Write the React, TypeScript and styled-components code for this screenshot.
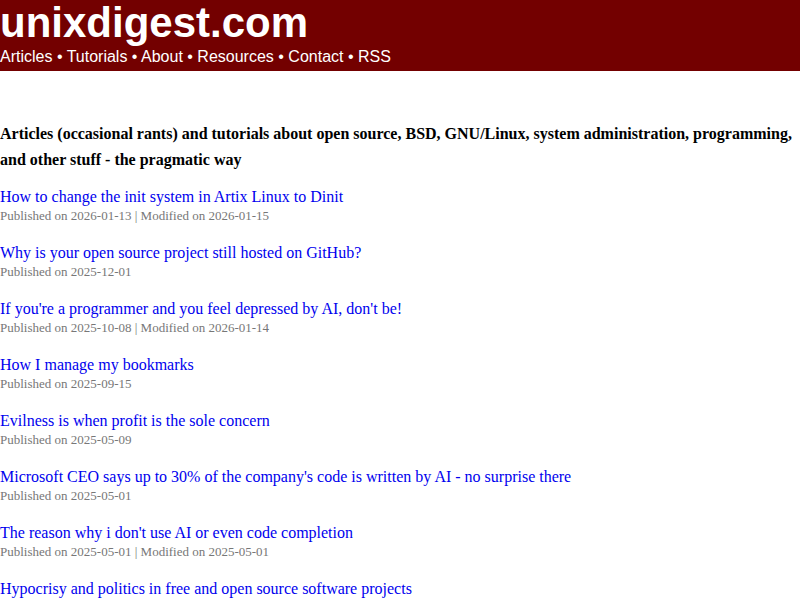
import React from 'react'
import styled, { createGlobalStyle } from 'styled-components'

const GlobalStyle = createGlobalStyle`
  body {
    margin: 0;
    background: #ffffff;
    font-family: 'Liberation Serif', 'Times New Roman', serif;
  }
`

interface Article {
  title: string
  published: string
  modified?: string
}

const articles: Article[] = [
  { title: 'How to change the init system in Artix Linux to Dinit', published: '2026-01-13', modified: '2026-01-15' },
  { title: 'Why is your open source project still hosted on GitHub?', published: '2025-12-01' },
  { title: "If you're a programmer and you feel depressed by AI, don't be!", published: '2025-10-08', modified: '2026-01-14' },
  { title: 'How I manage my bookmarks', published: '2025-09-15' },
  { title: 'Evilness is when profit is the sole concern', published: '2025-05-09' },
  { title: "Microsoft CEO says up to 30% of the company's code is written by AI - no surprise there", published: '2025-05-01' },
  { title: "The reason why i don't use AI or even code completion", published: '2025-05-01', modified: '2025-05-01' },
  { title: 'Hypocrisy and politics in free and open source software projects', published: '2025-04-20' }
]

const navItems = ['Articles', 'Tutorials', 'About', 'Resources', 'Contact', 'RSS']

const App: React.FC = () => {
  return (
    <>
      <GlobalStyle />
      <Header>
        <SiteTitle href="#">unixdigest.com</SiteTitle>
        <Nav>
          {navItems.map((item, i) => (
            <React.Fragment key={item}>
              {i > 0 && <Bullet> • </Bullet>}
              <NavLink href="#">{item}</NavLink>
            </React.Fragment>
          ))}
        </Nav>
      </Header>
      <Main>
        <Intro>
          Articles (occasional rants) and tutorials about open source, BSD, GNU/Linux, system administration,
          programming, and other stuff - the pragmatic way
        </Intro>
        <List>
          {articles.map((a) => (
            <Item key={a.title}>
              <ArticleLink href="#">{a.title}</ArticleLink>
              <Meta>
                Published on {a.published}
                {a.modified ? ` | Modified on ${a.modified}` : ''}
              </Meta>
            </Item>
          ))}
        </List>
      </Main>
    </>
  )
}

const Header = styled.header`
  background-color: #730000;
  color: #ffffff;
  height: 71px;
  display: flex;
  flex-direction: column;
  font-family: 'Liberation Sans', Arial, sans-serif;
`
const SiteTitle = styled.a`
  color: #ffffff;
  text-decoration: none;
  font-size: 42px;
  font-weight: 700;
  line-height: 46px;
`
const Nav = styled.nav`
  font-size: 16px;
  line-height: 22px;
`
const NavLink = styled.a`
  color: #ffffff;
  text-decoration: none;
`
const Bullet = styled.span`
  color: #ffffff;
`
const Main = styled.main`
  padding-top: 50px;
`
const Intro = styled.h1`
  font-size: 16px;
  font-weight: 700;
  line-height: 26px;
  margin: 0 0 14px 0;
`
const List = styled.div`
  display: flex;
  flex-direction: column;
  gap: 18px;
`
const Item = styled.div`
  display: flex;
  flex-direction: column;
`
const ArticleLink = styled.a`
  color: #0000ee;
  text-decoration: none;
  font-size: 16px;
  line-height: 20px;
`
const Meta = styled.span`
  color: #777777;
  font-size: 13px;
  line-height: 18px;
`

export default App
